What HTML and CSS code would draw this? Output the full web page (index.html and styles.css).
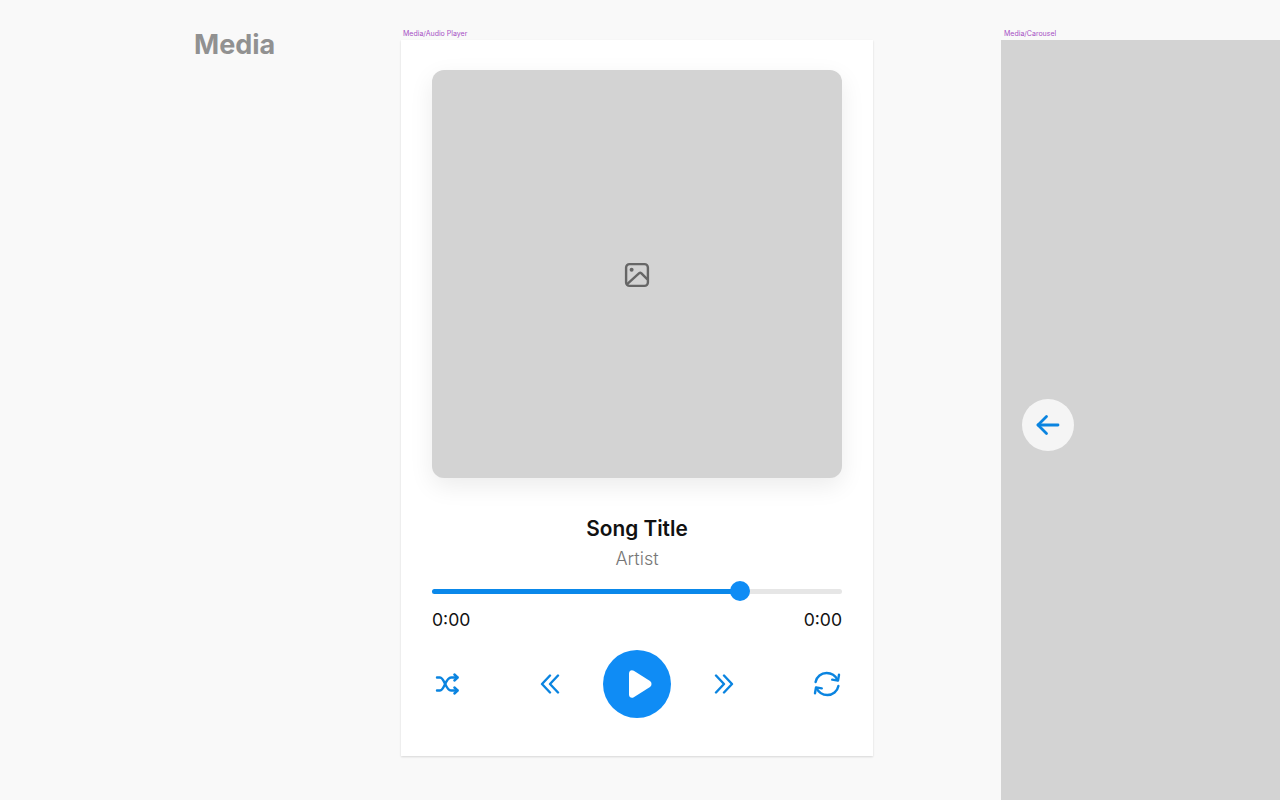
FILE: index.html
```html
<!DOCTYPE html>
<html lang="en">
<head>
<meta charset="UTF-8">
<title>Media</title>
<link rel="stylesheet" href="styles.css">
</head>
<body>
  <h1 class="section-title">Media</h1>

  <div class="frame-label player-label">Media/Audio Player</div>
  <section class="player">
    <div class="cover">
      <svg class="cover-icon" width="26" height="26" viewBox="0 0 26 26" fill="none" stroke="#666" stroke-width="2.4" stroke-linejoin="round">
        <rect x="2.1" y="2.1" width="21.8" height="21.8" rx="3.4"/>
        <circle cx="7.6" cy="7.8" r="2" fill="#666" stroke="none"/>
        <path d="M2.6 22.6 L15.2 11.2 Q16.2 10.4 17.2 11.2 L23.4 17.4"/>
      </svg>
    </div>

    <div class="song-title">Song Title</div>
    <div class="artist">Artist</div>

    <div class="slider">
      <div class="slider-fill"></div>
      <div class="slider-thumb"></div>
    </div>
    <div class="times">
      <span>0:00</span>
      <span>0:00</span>
    </div>

    <div class="controls">
      <svg width="26" height="24" viewBox="0 0 26 24" fill="none" stroke="#0a84e0" stroke-width="2.4" stroke-linecap="round" stroke-linejoin="round">
        <path d="M2 5.5 H5 C9.5 5.5 10.5 18.5 16 18.5 H22.4"/>
        <path d="M2 18.5 H5 C9.5 18.5 10.5 5.5 16 5.5 H22.4"/>
        <path d="M19.4 2.5 L22.6 5.5 L19.4 8.5"/>
        <path d="M19.4 15.5 L22.6 18.5 L19.4 21.5"/>
      </svg>
      <div class="transport">
        <svg width="20" height="20" viewBox="0 0 20 20" fill="none" stroke="#0a84e0" stroke-width="2.4" stroke-linecap="round" stroke-linejoin="round">
          <path d="M10 1.5 L2 10 L10 18.5"/>
          <path d="M18 1.5 L10 10 L18 18.5"/>
        </svg>
        <button class="play-btn">
          <svg width="26" height="30" viewBox="0 0 26 30"><path d="M2 4.5 C2 1.5 4.6 0.4 6.8 1.7 L23 12 C25 13.4 25 16.6 23 18 L6.8 28.3 C4.6 29.6 2 28.5 2 25.5 Z" fill="#fff"/></svg>
        </button>
        <svg width="20" height="20" viewBox="0 0 20 20" fill="none" stroke="#0a84e0" stroke-width="2.4" stroke-linecap="round" stroke-linejoin="round">
          <path d="M2 1.5 L10 10 L2 18.5"/>
          <path d="M10 1.5 L18 10 L10 18.5"/>
        </svg>
      </div>
      <svg width="28" height="26" viewBox="0 0 28 26" fill="none" stroke="#0a84e0" stroke-width="2.4" stroke-linecap="round" stroke-linejoin="round">
        <path d="M2.6 11 C3.6 5.6 8.2 2 13.6 2 C18.4 2 22.4 4.6 24.6 9"/>
        <path d="M25.4 15 C24.4 20.4 19.8 24 14.4 24 C9.6 24 5.6 21.4 3.4 17"/>
        <path d="M26 3.8 L25 9.6 L19.2 8.6"/>
        <path d="M2 22.2 L3 16.4 L8.8 17.4"/>
      </svg>
    </div>
  </section>

  <div class="frame-label carousel-label">Media/Carousel</div>
  <section class="carousel">
    <button class="carousel-btn">
      <svg width="24" height="22" viewBox="0 0 24 22" fill="none" stroke="#0a84e0" stroke-width="2.8" stroke-linecap="round" stroke-linejoin="round">
        <path d="M22 11 H2"/>
        <path d="M10.5 2.5 L2 11 L10.5 19.5"/>
      </svg>
    </button>
  </section>
</body>
</html>
```

FILE: styles.css
```css
* {
  box-sizing: border-box;
}
html, body {
  height: 100%;
}
body {
  margin: 0;
  background-color: #f9f9f9;
  font-family: Inter, "Liberation Sans", sans-serif;
  overflow: hidden;
  position: relative;
}

/* free canvas: frames sit where they were placed */
.section-title {
  position: absolute;
  left: 194px;
  top: 28px;
  margin: 0;
  font-size: 27px;
  line-height: 34px;
  font-weight: 700;
  color: #919191;
}
.frame-label {
  position: absolute;
  top: 29px;
  font-size: 7px;
  line-height: 9px;
  color: #a64fc4;
}
.player-label {
  left: 403px;
}
.carousel-label {
  left: 1004px;
}
.player {
  position: absolute;
  left: 401px;
  top: 40px;
  width: 472px;
  height: 716px;
  padding: 30px 31px 0;
  background-color: #fff;
  box-shadow: 0 1px 2px rgba(0, 0, 0, 0.14);
}
.carousel {
  position: absolute;
  left: 1001px;
  top: 40px;
  width: 279px;
  height: 760px;
  display: flex;
  align-items: center;
  padding: 0 0 0 21px;
  background-color: #d3d3d3;
}
.carousel-btn {
  width: 52px;
  height: 52px;
  margin-top: 9px;
  padding: 0;
  border: none;
  border-radius: 50%;
  background-color: #f5f5f5;
  display: flex;
  align-items: center;
  justify-content: center;
}

.cover {
  height: 408px;
  border-radius: 12px;
  background-color: #d3d3d3;
  box-shadow: 0 8px 24px rgba(0, 0, 0, 0.08);
  display: flex;
  align-items: center;
  justify-content: center;
}
.cover-icon {
  margin-top: 1px;
}
.song-title {
  margin-top: 37px;
  text-align: center;
  font-size: 20.8px;
  line-height: 28px;
  font-weight: 600;
  color: #111;
}
.artist {
  margin-top: 3px;
  text-align: center;
  font-size: 18px;
  line-height: 26px;
  font-weight: 300;
  color: #777;
}
.slider {
  position: relative;
  height: 5px;
  margin-top: 17px;
  border-radius: 3px;
  background-color: #e6e6e6;
}
.slider-fill {
  width: 75%;
  height: 100%;
  border-radius: 3px;
  background-color: #0a88ea;
}
.slider-thumb {
  position: absolute;
  left: 298px;
  top: -8px;
  width: 20px;
  height: 20px;
  border-radius: 50%;
  background-color: #0f8cf5;
}
.times {
  display: flex;
  justify-content: space-between;
  margin-top: 14px;
  font-size: 17.6px;
  line-height: 24px;
  font-weight: 400;
  color: #111;
}
.controls {
  display: flex;
  align-items: center;
  justify-content: space-between;
  margin-top: 18px;
  padding: 0 1px 0 3px;
}
.transport {
  display: flex;
  align-items: center;
  gap: 43px;
}
.play-btn {
  width: 68px;
  height: 68px;
  padding: 0 0 0 5px;
  border: none;
  border-radius: 50%;
  background-color: #0f8cf5;
  display: flex;
  align-items: center;
  justify-content: center;
}
```
